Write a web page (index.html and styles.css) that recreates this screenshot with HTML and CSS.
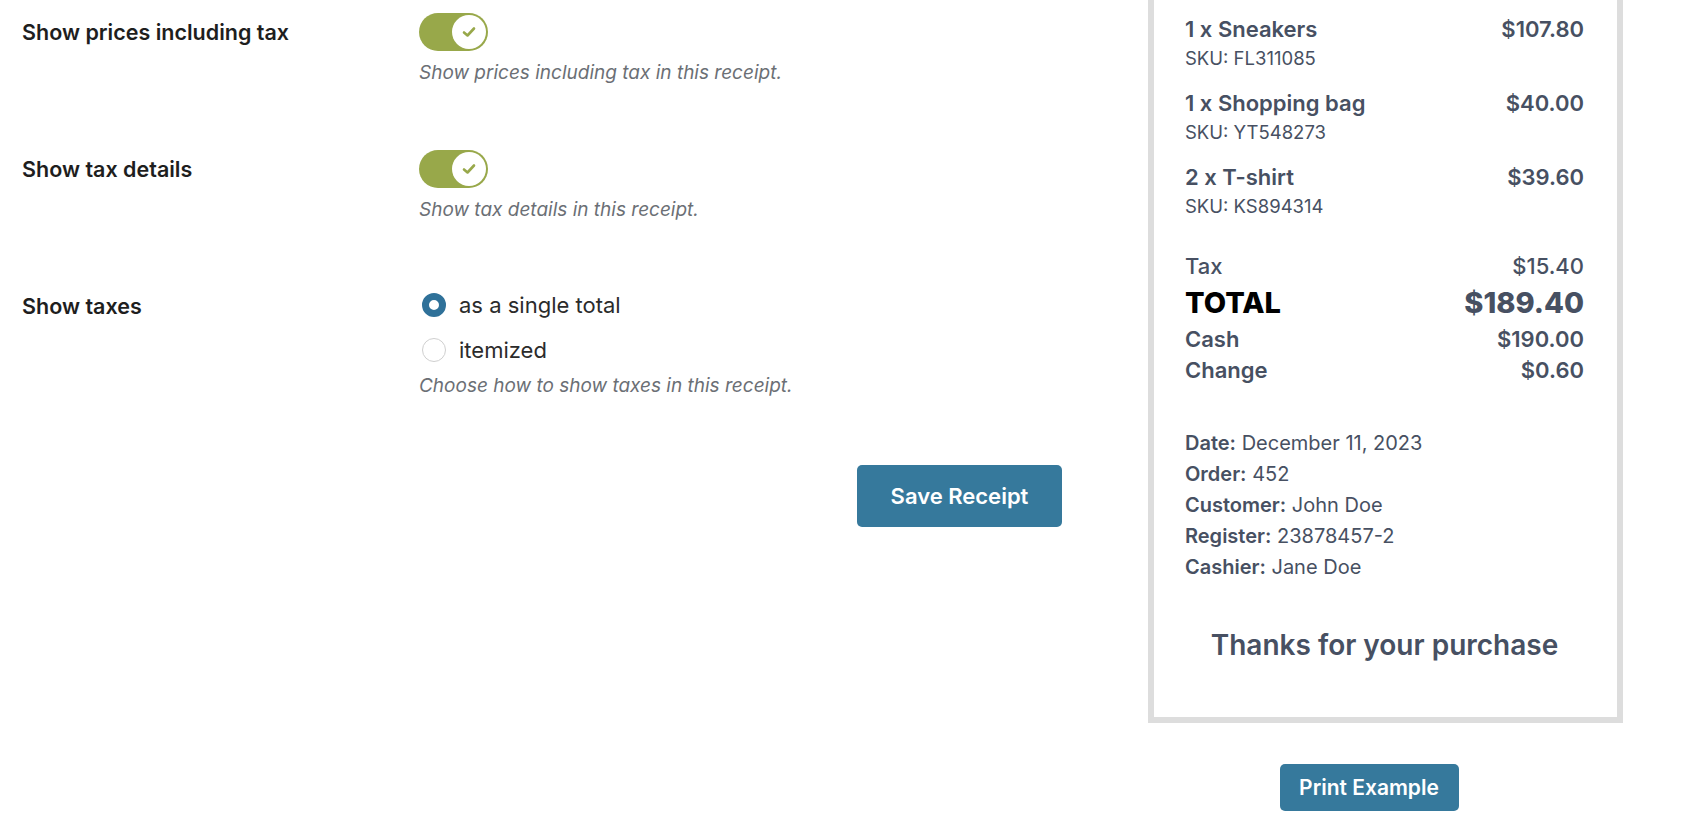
FILE: index.html
```html
<!DOCTYPE html>
<html>
    <head>
        <meta charset="UTF-8">
        <title>Receipt Settings</title>
        <link rel="stylesheet" href="styles.css">
    </head>
    <body>
        <div class="page">
            <div class="settings">
                <div class="row">
                    <div class="label">Show prices including tax</div>
                    <div class="field">
                        <span class="toggle on">
                            <span class="knob">
                                <svg width="14" height="12" viewBox="0 0 14 12"><polyline points="2,6.5 5.5,9.5 12,2.5" fill="none" stroke="#98a84a" stroke-width="2.6" stroke-linecap="round" stroke-linejoin="round"/></svg>
                            </span>
                        </span>
                        <p class="desc">Show prices including tax in this receipt.</p>
                    </div>
                </div>
                <div class="row">
                    <div class="label">Show tax details</div>
                    <div class="field">
                        <span class="toggle on">
                            <span class="knob">
                                <svg width="14" height="12" viewBox="0 0 14 12"><polyline points="2,6.5 5.5,9.5 12,2.5" fill="none" stroke="#98a84a" stroke-width="2.6" stroke-linecap="round" stroke-linejoin="round"/></svg>
                            </span>
                        </span>
                        <p class="desc">Show tax details in this receipt.</p>
                    </div>
                </div>
                <div class="row last">
                    <div class="label">Show taxes</div>
                    <div class="field">
                        <label class="radio"><span class="dot checked"></span>as a single total</label>
                        <label class="radio"><span class="dot"></span>itemized</label>
                        <p class="desc tight">Choose how to show taxes in this receipt.</p>
                    </div>
                </div>
                <div class="actions">
                    <button class="btn save">Save Receipt</button>
                </div>
            </div>

            <div class="preview">
                <div class="receipt">
                    <div class="item">
                        <div class="line"><span>1 x Sneakers</span><span>$107.80</span></div>
                        <div class="sku">SKU: FL311085</div>
                    </div>
                    <div class="item">
                        <div class="line"><span>1 x Shopping bag</span><span>$40.00</span></div>
                        <div class="sku">SKU: YT548273</div>
                    </div>
                    <div class="item">
                        <div class="line"><span>2 x T-shirt</span><span>$39.60</span></div>
                        <div class="sku">SKU: KS894314</div>
                    </div>

                    <div class="totals">
                        <div class="line tax"><span>Tax</span><span>$15.40</span></div>
                        <div class="line total"><span class="total-label">TOTAL</span><span>$189.40</span></div>
                        <div class="line pay"><span>Cash</span><span>$190.00</span></div>
                        <div class="line pay"><span>Change</span><span>$0.60</span></div>
                    </div>

                    <div class="meta">
                        <div><b>Date:</b> December 11, 2023</div>
                        <div><b>Order:</b> 452</div>
                        <div><b>Customer:</b> John Doe</div>
                        <div><b>Register:</b> 23878457-2</div>
                        <div><b>Cashier:</b> Jane Doe</div>
                    </div>

                    <div class="thanks">Thanks for your purchase</div>
                </div>
                <div class="print-wrap">
                    <button class="btn print">Print Example</button>
                </div>
            </div>
        </div>
    </body>
</html>
```

FILE: styles.css
```css
body {
    margin: 0;
    font-family: Inter, "Noto Sans", sans-serif;
    background-color: #fff;
    color: #1e1e1e;
}
.page {
    display: flex;
    align-items: flex-start;
    padding-left: 22px;
    gap: 86px;
}
.settings {
    width: 1040px;
}
.row {
    display: grid;
    grid-template-columns: 397px 1fr;
    padding: 13px 0 52px;
}
.row.last {
    padding-bottom: 0;
}
.label {
    font-size: 21.5px;
    font-weight: 600;
    line-height: 38px;
    color: #1e1e1e;
}
.toggle {
    display: flex;
    justify-content: flex-end;
    align-items: center;
    width: 69px;
    height: 38px;
    padding: 2px;
    box-sizing: border-box;
    border-radius: 19px;
    background-color: #98a84a;
}
.knob {
    display: flex;
    align-items: center;
    justify-content: center;
    width: 34px;
    height: 34px;
    border-radius: 50%;
    background-color: #fff;
}
.desc {
    margin: 10px 0 0;
    font-size: 19px;
    font-style: italic;
    line-height: 24px;
    color: #6b6f75;
}
.desc.tight {
    margin-top: 6px;
}
.radio {
    display: flex;
    align-items: center;
    gap: 13px;
    height: 36px;
    margin-bottom: 9px;
    margin-left: 3px;
    font-size: 22px;
    color: #2b2b2b;
}
.radio:nth-of-type(2) {
    margin-bottom: 0;
}
.dot {
    width: 24px;
    height: 24px;
    box-sizing: border-box;
    border-radius: 50%;
    border: 1px solid #cfcfcf;
    background-color: #fff;
}
.dot.checked {
    border: 7px solid #2f7199;
}
.actions {
    display: flex;
    justify-content: flex-end;
    margin-top: 67px;
}
.btn {
    font-family: Inter, "Noto Sans", sans-serif;
    font-weight: 600;
    color: #fff;
    background-color: #36799c;
    border: none;
    border-radius: 5px;
    cursor: pointer;
}
.btn.save {
    width: 205px;
    height: 62px;
    font-size: 22px;
}
.preview {
    width: 475px;
}
.receipt {
    border: 6px solid #dddddd;
    border-top: none;
    padding: 14px 33px 54px 31px;
    color: #475062;
}
.line {
    display: flex;
    justify-content: space-between;
}
.item {
    margin-bottom: 16px;
}
.item .line {
    font-size: 22px;
    font-weight: 600;
    line-height: 30px;
}
.sku {
    font-size: 18.5px;
    line-height: 28px;
}
.totals {
    margin-top: 30px;
}
.line.tax {
    font-size: 22px;
    font-weight: 500;
    line-height: 32px;
}
.line.total {
    font-size: 29px;
    font-weight: 800;
    line-height: 42px;
}
.total-label {
    color: #000;
}
.line.pay {
    font-size: 22px;
    font-weight: 600;
    line-height: 30px;
}
.line.pay:last-child {
    line-height: 32px;
}
.meta {
    margin-top: 42px;
    font-size: 20px;
    line-height: 31px;
}
.meta b {
    font-weight: 600;
}
.thanks {
    margin-top: 44px;
    text-align: center;
    font-size: 28px;
    font-weight: 600;
    line-height: 36px;
}
.print-wrap {
    display: flex;
    justify-content: center;
    margin-top: 41px;
    padding-right: 33px;
}
.btn.print {
    width: 179px;
    height: 47px;
    font-size: 21px;
}
```
